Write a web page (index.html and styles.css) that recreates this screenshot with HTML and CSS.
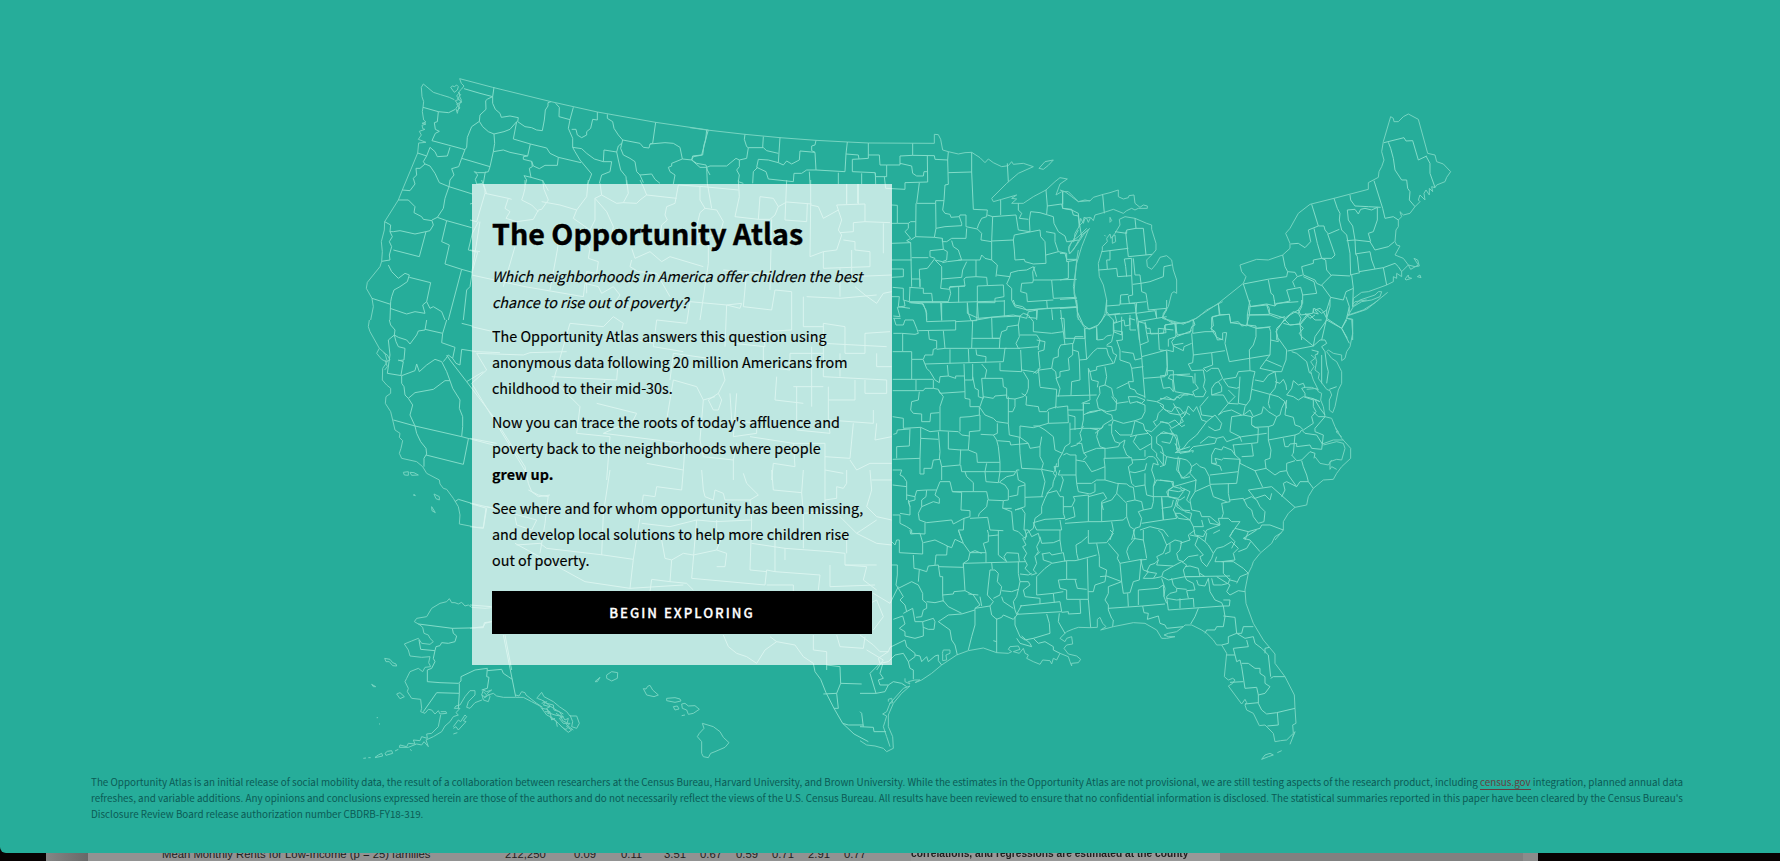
FILE: index.html
```html
<!DOCTYPE html>
<html lang="en">
<head>
<meta charset="utf-8">
<title>The Opportunity Atlas</title>
<link rel="stylesheet" href="styles.css">
</head>
<body>
<main class="hero">
<svg class="map" viewBox="0 0 1780 853" aria-hidden="true">
<!-- Pacific Northwest -->
<g transform="translate(350 60) scale(.33333)">
<path class="coast" d="M329,56 428,82 603,125 742,156 917,187 1075,210M329,56 334,70 342,78 334,88 327,95 329,110 334,120 328,135 322,160 318,145 325,135 316,122 328,118 320,108 326,100M324,96 332,104 322,116 336,126 320,132 330,144 320,154M220,72 250,97 272,104 298,112 313,119M220,72 214,82 216,110 221,125 219,142 217,155 221,180 228,186 216,190 228,192 216,196 219,207 225,208 208,214 214,225 205,238 228,247 206,249 203,279 182,330 157,390 145,420 104,485 103,510 94,545 97,575 95,604 90,620 52,667 49,685 66,715 70,740 62,780M302,82 308,78 313,80 320,75 325,80 322,90 313,97Z"/>
<path d="M219,142 265,155 296,158 316,148M265,155 262,185 253,188 256,208 268,214 256,220 246,242 335,266 345,269M342,86 390,100 428,110 432,82M428,110 413,117 407,122 408,148 390,165 388,184 365,200 352,232 350,262 345,269 335,295 326,320 305,326 312,345 300,360 297,380M388,184 398,200 415,215 432,222 462,215 480,208 500,185M428,110 428,130 436,148 450,160 454,172 480,168 505,173 503,185 525,200 545,203 560,210 577,212 583,180 586,150 594,138 594,128 603,125M500,185 490,237 541,252 590,264 600,280 625,292 693,308M432,222 434,250 430,275 420,320 415,335 403,338 382,338M430,275 460,270 480,277 533,288 541,252M335,295 420,320M533,288 520,290 520,298 545,304 550,318 568,326 585,316 622,316 625,292M545,304 547,320 538,325 543,352 522,347 530,360 526,375M543,352 578,362 595,392M382,338 373,335 383,345 376,358 380,372 400,370 406,335M400,370 410,402M617,130 628,142 627,170 660,179 670,142M660,179 655,205 668,235 668,262 675,275 690,300 725,342 712,375M665,208 678,208 682,225 695,233 710,225 710,215 722,205 728,178 742,180 742,156M668,262 695,266 710,280 733,297 760,305 762,270 800,276 805,258 815,250M772,163 772,175 788,185 792,205 805,225 818,240 870,250 880,262 897,264 900,252 908,250 917,187M900,252 945,248 970,250 990,262 997,297 1025,300 1030,290 1058,285 1062,255 1075,210M997,297 965,310 965,318 955,322 960,335 975,345 970,372M1025,300 1040,310 1068,315 1072,330 1080,345M818,240 812,265 820,285 840,295 855,305 860,335 870,345 880,368M760,305 785,305 780,335 755,345 748,370M800,276 805,300 812,330 828,350 830,375M870,345 905,342 915,358 930,370M203,279 230,288 240,262 255,275 262,290 292,288 300,262M230,288 220,305 225,312 240,318 255,340 268,368 297,380 367,402M225,312 210,325 198,325 200,345 190,355 195,372 180,392 157,390M297,380 285,415 280,445 262,472 246,480M145,420 175,420 195,440 192,458 215,470 220,478 246,482 250,495 240,512 228,515 195,522 150,512 130,515 120,515 122,495 104,485M262,472 290,482 365,503M228,515 208,590 130,570M120,515 127,530 118,545 125,560 118,585 120,600 95,604M115,615 125,635 145,655 165,640 178,645 172,665 150,680 132,690 125,710 122,725 120,780M290,482 275,545 298,555 285,612 335,628M335,628 295,780M367,635 360,680 350,690 340,780M178,652 242,668 230,725 218,735 225,760 195,755 170,762 120,745M66,715 122,733M230,725 240,745 250,740 275,755 285,780M367,430 360,432M385,485 367,520 355,570 383,577 367,635M335,628 367,637"/>
</g>
<!-- Interior West and northern Plains -->
<g transform="translate(470 180) scale(.33333)">
<path d="M35,0 45,30 45,40 20,125 0,120M45,40 115,55 125,58M0,210 30,215M30,125 5,280M5,285 165,320 340,350M115,55 105,85 120,95 108,115 140,125 190,118 205,90 215,88 235,60 222,28 218,0M165,0 165,25 160,45 155,60 185,75 205,95M215,65 270,75 320,90 350,50 355,0M320,90 310,115 360,150 375,120 375,55 395,45 440,70 460,68 475,40 470,0M375,55 410,95 430,140 425,165 440,180M395,45 390,10M460,68 500,70 510,60 530,45 520,20 510,0M530,45 620,55M625,15 615,70 590,80 585,105 592,120 575,135 570,170M625,15 700,20 805,30M690,20 690,60 705,85 690,98 680,140 690,190 650,200M705,85 740,90 760,125 750,160 715,170M805,0 808,50 795,110 865,118 870,50 910,55 925,80 915,105 900,118 865,118M925,80 950,66 1025,72M950,0 945,120 1010,125 1012,70M1022,0 1022,75 1020,230M1022,75 1045,80 1060,115 1105,90 1115,120 1105,150 1115,165 1100,210 1060,215 1020,230M1105,90 1100,75 1185,72 1185,125 1260,128M1130,12 1130,72M1165,12 1165,72M1110,158 1150,155 1150,128 1185,125M1120,180 1155,185 1155,210 1200,215 1200,260 1145,262 1145,210M1060,215 1060,265 1145,262 1145,290 1265,285M1240,130 1240,220M270,150 262,210 240,330M135,200 100,320M345,180 360,205 355,235 385,245 380,280 350,275 350,340M485,205 495,235 540,215 575,245 600,230 700,260M485,240 480,260 505,275 560,280 600,350M340,350 345,310 385,320 395,340 430,320 450,345 440,360 480,380M715,170 715,250 690,420M760,270 905,282M830,275 820,380 905,390 915,330 965,335 965,450 880,455 885,500 790,490M905,118 900,330M1000,350 1000,440 1060,440M1010,350 1110,355 1220,345M1110,265 1110,350M1155,320 1185,345 1220,370 1240,340 1265,335M660,365 770,375 810,385 815,370 770,375 765,500M660,365 650,430 560,420 550,500 640,515M300,430 245,620M300,430 400,440 430,410 460,430 450,470 400,480M20,520 160,525 180,518 290,515M20,520 50,570 5,610 170,880M5,440 70,455M245,590 440,600 445,540 550,550M380,670 500,700 490,720 400,760 640,790M385,650 405,600M600,600 610,520 750,540 765,600 745,640 715,660 730,690 745,690 755,660 745,640M610,600 680,620 700,660 735,650M880,500 880,560 960,570 960,520 1060,520M920,590 915,660 1000,670M1060,430 1125,440 1125,520 1185,520 1185,460 1260,455M1060,490 1250,500M1060,430 1060,590 1250,600 1250,640 1185,640 1185,600M1025,500 1025,680M1075,620 1075,720 1210,730 1210,690M980,620 980,750 1080,760 1075,720M780,640 785,720 860,730 860,760 790,770 800,640M1155,600 1155,660 1075,660M1110,520 1110,590M970,620 1060,620M330,680 320,760 420,770M420,770 410,900M700,660 690,780 700,830 790,840 800,790M790,840 790,900M530,850 640,870M840,770 970,790 975,860 910,850 905,900M970,790 1065,790 1065,870 1120,880M1140,840 1160,870 1200,850 1265,850M1065,830 1140,835 1150,730M250,600 330,680M1220,520 1220,560 1265,560M1220,730 1215,780 1265,770M640,870 645,800M610,600 590,720M460,470 550,490M0,775 80,790"/>
</g>
<!-- Southwest and west Texas -->
<g transform="translate(470 470) scale(.33333)">
<path d="M640,0 635,60 560,50 555,80 520,75 515,110 490,268M420,0 400,130 395,255M175,60 205,75 235,80M235,75 225,160 210,250M0,100 50,115 40,175 0,170M50,110 200,150 185,180 140,165 135,140M135,220 345,335 480,355 640,345M140,225 210,220 230,235 400,255 490,268 480,355M540,365 545,328 600,335 650,340 670,360M575,210 585,265 605,270 600,335M605,270 640,250 670,255 740,240M515,160 600,170 680,150 665,325 885,345 890,300 915,305M740,150 740,180 760,190 740,240 770,250 765,290 740,290M695,0 700,60 705,80 730,90 735,60 760,70 765,90 840,90M820,10 830,40 865,75 840,90 845,150 735,155 680,150M905,0 910,60 995,68 1000,0M845,150 840,300 890,305M845,220 945,235 1080,245 1125,250 1125,285 1220,285M915,235 915,305 1050,315 1045,360M945,270 945,235M890,345 970,345 970,365M1080,285 1080,350 1215,345M1065,0 1065,125 1000,130 995,68M1065,125 1100,130 1130,160 1160,190M1130,180 1130,250M1000,130 1000,235M1100,50 1120,55 1130,40 1130,0M1065,90 1100,85 1100,50M1200,0 1205,60 1190,110 1220,140 1265,150M1205,30 1265,30M1160,190 1220,220 1265,225M1220,150 1160,190M760,495 775,530 800,550 830,560 860,580 885,540 920,515 900,500M920,515 975,525 1000,560 1030,580 1035,605 1052,628 1068,668 1092,715 1118,760 1152,792 1195,815M1030,495 1030,540 1070,545 1070,600M1070,585 1110,590 1112,640 1100,670 1060,672M1112,640 1175,642M1100,670 1105,715 1092,715M1118,760 1135,765 1180,765M1100,495 1110,530 1180,535 1185,500M105,495 125,600M0,475 40,470 45,460 65,455M0,405 65,410M1210,370 1260,400 1285,350M1200,400 1220,390 1240,440 1210,480M1190,540 1240,570 1220,600M915,170 915,235M1125,285 1190,290 1180,330 1220,360"/>
</g>
<!-- California -->
<g transform="translate(350 320) scale(.33333)">
<path class="coast" d="M58,0 55,20 60,35 88,85 105,100 112,125 98,145 97,180 110,195 122,205 122,220 108,230 106,250 122,275 128,300 135,330 150,340 148,352 158,362 153,385 148,400 155,415 200,425 218,440 230,460 268,480 270,492 280,505 290,508 310,535 325,560 330,585 328,612 380,622 400,622M88,85 80,100 95,118 108,125 120,120 112,105 100,98M105,120 112,140 104,150M160,457 175,455 175,466 163,465ZM180,457 192,458 205,465 185,466ZM252,522 268,530 268,540 258,536ZM245,560 256,578 246,572ZM190,525 194,524 196,527Z"/>
<path d="M118,0 122,15 135,30 133,45 145,52 170,60 180,72 200,45 205,33 225,30 230,0M225,28 278,40 290,0M278,40 275,68 315,82 308,115M133,45 138,65 145,80 165,85 162,120 145,122M145,120 160,125 153,165M133,45 115,60 120,105 112,160 155,167 195,152 200,132 208,155 230,135 255,118 275,125 290,155 300,182 308,205 330,240 328,265 338,290 338,320 335,350M290,105 300,120 350,185 430,290 525,440 535,490 545,515 565,530 600,525M335,88 330,135 318,130 308,115 295,105 288,115 280,125M155,167 155,190 162,200 165,225 175,235 188,255 180,285 195,318 200,340 212,365 228,385 230,402 222,415 222,440M175,235 195,218 250,208 285,182 300,182M130,300 195,318 335,350 430,375M355,357 340,433 228,405M335,88 380,95 450,98M335,10 367,18M350,185 400,155M315,545 325,538 365,550 408,560 460,570M408,565 400,622"/>
</g>
<!-- Alaska and Hawaii -->
<g transform="translate(350 580) scale(.33333)">
<path class="coast" d="M425,83 405,85 365,82 355,75 345,78 335,67 325,72 315,68 305,68 298,56 290,65 270,70 245,85 230,110 200,115 193,125 210,135 218,142 222,160 235,165 240,175 250,185 240,193 215,190 205,175 185,183 163,192 175,210 180,228 215,232 240,230 236,248 242,260 225,262 218,275 205,265 180,275 170,295 165,305 175,325 172,335 185,355 212,358 215,385 212,395 225,400 235,388 245,390 255,402 265,392 270,402 290,400 288,395 272,395M272,405 265,440 245,460 230,462 232,475 215,470 210,482 190,480 195,492 175,490 170,500 150,495 148,502 175,502 200,492 215,495 222,485 235,500 228,480 250,470 275,455 285,438 300,425 310,410 325,405 318,398 330,385 313,385 318,378 330,375 345,350 360,332 375,332 375,345 355,365 350,382 360,385 375,368 396,360M180,508 185,512M135,513 145,508M105,520 112,514 125,512 128,520 108,526ZM75,532 85,525 95,520 98,528 75,533M40,535 48,534M55,533 62,533M396,345 400,360 415,365 420,350 412,340 425,330 410,335 400,330 395,345 406,352 415,345 430,340 440,348 460,352 497,352M400,335 410,345 402,355M497,345 507,348 515,335 525,338 528,345 560,370 578,382M497,352 520,352 545,365 570,378 590,405 605,412 625,430 640,445 655,457 665,450 650,440 660,430 640,430 628,415 640,410 615,405 600,400 590,385 600,380 580,375 590,365 575,370M560,355 575,337 582,350 610,365 628,380 650,395 660,408 680,408 688,430 680,445 665,440 668,425 660,405M562,355 575,360 590,370 610,375 612,390 628,395 645,420 655,415 650,435 670,450M585,395 600,395 605,420 615,415M575,385 592,388 598,402 590,398M600,412 618,422 622,440M618,400 632,408 638,422 650,428M632,438 645,448 652,446M580,362 600,378 622,392 640,402M310,440 325,420 332,425 345,405 350,410 340,422 348,425 325,450 318,440 310,445M310,462 322,458M104,235 120,238 128,248 138,252 140,258 128,257 118,245 108,245ZM65,313 77,320 70,320ZM140,342 150,338 163,350 150,356ZM80,413 84,413M87,432 90,432M735,305 750,292 742,305ZM770,285 785,275 803,278 802,295 785,303 770,295ZM880,326 888,327 893,319 900,316 908,330 925,345 912,350 890,345ZM950,355 975,353 990,357 993,363 975,367 950,362ZM970,380 982,378 987,387 975,390ZM995,372 1005,370 1015,378 1035,377 1048,388 1030,400 1015,403 1010,390 997,385ZM995,407 1005,405M1057,430 1090,440 1110,455 1120,472 1137,488 1125,502 1095,515 1082,520 1075,533 1060,530 1055,520 1055,485 1042,470 1048,460 1062,445Z"/>
<path d="M205,132 307,145 400,143 403,128 425,125M307,145 310,160 320,168 315,185 295,190 275,188 270,197 258,200 255,212 212,208 207,180M255,212 250,235 255,245 245,265 232,270 232,305 270,308 325,310 333,303 333,290 375,270 412,265 410,290 417,292 412,325 395,330M328,310 328,340 260,338 220,395M328,340 325,385M412,272 455,268 460,280 475,290 487,298M460,165 497,350"/>
</g>
<!-- Upper Midwest -->
<g transform="translate(690 80) scale(.33333)">
<path class="coast" d="M0,143 50,150 165,163 270,173 378,181 472,186 535,189 733,190 733,163 745,164 752,178 758,210 775,215 805,222 825,218 845,217 870,233 885,248 895,237 910,248 935,260 955,257 965,245 970,253 1000,250 1030,260 985,280 950,310 905,355 910,365 935,358 980,345 965,355 980,357 965,370 1000,370 1030,350 1068,330 1095,305 1110,293 1132,297 1110,312 1098,345 1115,335 1135,335 1150,350 1165,365 1200,362M1047,265 1065,245 1090,240 1075,256 1060,268ZM1200,445 1175,465 1150,510 1138,522 1136,500 1150,480 1165,450M1167,440 1172,415 1180,430 1185,415 1200,412M1165,510 1160,540 1155,600 1152,640 1162,690 1165,720"/>
<path d="M50,150 47,180 35,225 8,228 5,240 30,262 50,262 60,258 110,258 138,235 148,240M50,262 52,310 65,385M165,163 163,178 170,200 175,203 220,203 230,212 265,220M220,170 218,203M175,203 170,235 148,240 148,260 140,270 148,285 145,305 160,310M270,173 265,248 280,255 290,243 305,252 328,240 330,213 375,217 378,270M265,248 235,240 205,238 200,262 228,275 235,297 310,305 312,280 335,280 350,270 378,270 465,275 468,222M378,181 375,195 365,198 365,212 375,217M472,186 468,222 505,225 507,237 535,235 535,189M507,237 487,238 487,275 555,278 557,290 590,290 590,255 570,255 568,225 535,225M203,262 190,275 188,310M590,255 630,255 630,228 668,226 668,190M668,226 733,227 735,238 773,240 775,215M583,290 587,325 645,328 645,308 713,306 712,228M630,250 665,258 668,280 680,288 700,288 702,275 712,275M556,278 557,312M515,280 515,312M445,278 445,312M358,275 360,312M470,312 470,370M503,312 503,370M688,308 680,370 737,370 737,362 762,362 765,315 775,313 773,240M775,278 845,276 850,388 892,390 890,410 875,415 865,435 862,445M845,217 845,276M952,250 955,305M762,362 758,390 765,400 780,403 783,412 808,410 810,405 828,405 828,440 862,447M737,370 738,445 733,472 677,470 678,370M738,445 765,440 815,437 815,430 808,410M605,375 622,376 622,430 605,430M622,430 655,430 662,425 677,425M655,430 655,445 645,455 662,475 650,482 662,488M605,490 662,488 665,620M677,470 662,480M757,475 760,508 720,512 720,530 735,535 712,565 688,568 690,620M733,472 757,475 757,485 770,485 785,475 828,475 830,445M785,482 790,500 805,510 815,540 772,545 757,548M760,508 772,515 770,540 757,545 735,540 755,560 755,597 815,592 818,570 830,545M605,540 665,540M665,533 715,533M605,567 640,567 640,590 605,592M862,447 875,460 873,480 905,485 905,540M892,405 908,410 978,405 985,450M932,360 932,405M905,485 908,410M905,483 970,480 973,465 1050,450 1052,470 1065,485 1068,550 1030,552 1005,545 1003,538 975,540 973,510 970,480M805,540 870,540 875,525 885,535 905,540 922,555 918,590M858,540 858,590 828,592 822,597 825,618 780,620 778,628 752,625 755,597M858,590 890,592 892,615M920,585 960,590 962,578 985,572 1010,570 1030,560 1040,590M985,370 985,390 995,400 988,415 1015,418M985,450 1020,455 1018,420 1022,395 1050,398 1090,410 1092,430 1105,455 1125,468 1130,485 1165,480M1068,330 1072,378 1115,372 1118,385 1145,390 1165,400 1168,430 1175,470M1072,378 1070,402M1118,335 1118,372M1068,455 1095,460 1095,485 1105,515 1130,520 1130,545 1160,540M1068,525 1105,515M1160,598 1085,600 1030,600 1028,575 1035,560M1085,600 1090,655 1160,652M1030,600 1028,608 995,610 992,635 1010,640 1012,665 1090,660M960,590 950,612 965,625 965,660 975,680 1012,690 1160,680M940,615 942,650 915,655 915,668 862,668 862,618 940,615M658,665 775,665 782,640 778,622 825,618M806,620 806,667M658,622 700,625 700,640 725,640 728,668M665,597 690,597 690,622M660,622 658,665 640,660 640,625 608,622M605,650 628,650 625,680 660,685M695,668 708,690 710,720M752,668 755,720M832,668 832,700 865,715 862,668M865,715 900,712 970,705 1010,715 1015,695 1042,690 1040,720M1085,688 1088,720M610,715 632,715"/>
</g>
<!-- Great Lakes shore and Northeast -->
<g transform="translate(1060 100) scale(.33333)">
<path class="coast" d="M0,270 15,275 35,290 55,305 75,300 90,303 100,292 130,283 150,278 175,270 175,290 190,297 205,293 207,287 222,285 225,310 240,322 250,315 262,318 262,325 235,325 225,330 215,325 200,332 190,340 160,328 130,338 105,345 100,362 92,352 85,367 80,355 72,352 70,365 60,375 45,400 42,425 20,425M150,352 155,362 150,367ZM133,405 137,409M157,430 157,410 165,405 167,425ZM85,388 70,405 50,435 30,460 25,450 35,425 55,410 80,385M85,390 75,415 65,440 50,490 40,560 52,620 52,650 65,670 75,685 90,687 110,680 125,662 135,640 140,600 130,555 118,530 115,490 127,450 127,440 142,425 140,415 150,402 153,415 165,400 180,375 178,358 195,350 225,355 260,370 275,375 275,388 288,430 288,450 275,465 260,480 262,500 275,508 290,490 300,472 320,467 335,480 340,510 350,540 350,580 342,575 335,580 325,620 310,640 308,655 345,665 370,672 400,660 475,610 550,550 558,530 545,515 540,495 590,478 625,480 668,465 690,445 690,430 677,400 690,385 715,340 750,313 822,295 925,268 925,248 955,232 957,215 965,200 972,180 965,155 970,125 992,50 1000,55 1002,65 1015,65 1030,50 1045,42 1075,58 1103,160 1125,165 1130,185 1150,192 1172,215 1160,232 1155,245 1130,255 1125,263 1115,260 1118,275 1108,265 1108,285 1098,270 1092,280 1095,300 1080,285 1075,300 1080,305 1065,320 1050,340 1030,345 1020,335 1025,350 1015,360 1015,380 1008,390 1005,425 1010,435 1020,438 1005,465 1030,475 1045,495 1065,500 1078,498 1073,480 1062,475 1075,495 1052,508 1045,495 1025,515 1025,530 1010,520 1010,535 1000,530 1000,545 980,555 925,575 905,577 880,595 878,620 900,600 945,585 955,575 965,575 960,590 935,600 905,605 880,620 865,645 910,630 945,608 983,577M1035,537 1045,525 1045,532 1055,535 1038,540ZM1072,530 1080,525 1083,533Z"/>
<path d="M128,283 133,340M8,275 8,325 35,328 40,345 55,348 58,380M972,128 1032,113 1038,123 1058,122 1075,180 1100,168M985,127 992,145 1000,175 1005,210 1025,240 1040,240 1043,265 1050,275 1048,300 1065,320M1098,168 1110,190 1110,220 1125,262M942,242 968,325 975,355 1000,350 1015,360M870,285 872,300 885,318 925,320 962,322M822,295 832,325 840,340 838,360 845,390 860,405 870,460 872,525M862,330 885,328 895,342 902,328 915,325 935,330 952,322 952,360 940,395 925,400 932,425M862,330 865,360 878,378 885,420 860,422M755,313 775,378 792,378 795,390 805,402 838,388M762,385 772,430 785,475 815,475 825,465 803,402M745,390 775,378M745,390 752,425 735,443 715,430 692,432M885,420 930,425 945,450 985,440 1003,425M885,420 887,460 892,470 897,515 970,503 1005,490 1015,500 1025,515M885,462 930,455 935,480 945,507M970,503 980,555M870,525 900,518M875,525 880,565 878,620M815,525 870,528M815,525 785,555 812,592 850,600 858,575 880,565M785,475 797,480 800,510 815,528M785,475 760,480 760,490 725,500 730,525 765,540 770,550 785,557M668,465 675,500 683,515 705,517 712,530 698,545 705,562M683,515 680,530 628,537 550,552 572,620M625,540 633,580 640,585 645,613 690,603 680,570 722,562 728,585 770,580 762,545 730,530M712,530 728,525M572,620 620,615 628,640M568,645 560,675 590,685 632,680M568,645 570,620M475,610 480,645 455,652 455,690 470,712 490,720M480,645 508,643 512,668 540,672 560,678M728,585 728,610 715,630 722,645 758,640 762,625 775,632 785,640 800,630 812,592M715,630 690,645 675,660 690,675 720,672M570,645 630,645 655,655 675,650M720,672 725,720M800,630 800,655 845,685 860,655 868,620 858,590M765,645 750,655 740,645 720,672M800,655 785,720M845,685 862,715M675,660 650,685 650,720M860,655 878,658 878,720M225,355 228,385 250,385 258,465M228,385 200,390 200,400 165,395M197,395 205,470 276,463M125,455 205,445M150,452 150,480 140,480 142,508 115,510M142,508 170,505 173,530 215,527 215,475 193,477 197,500 200,530M220,475 225,525 240,525 243,550 270,545 310,530 312,500 335,495M215,527 218,585 205,588 208,610 230,608M218,553 243,550 245,575 258,580 262,605 265,630 320,625M230,608 260,605M205,583 182,585 180,615 140,618M140,635 148,645 228,638 230,608M228,638 235,665 290,655 288,630M165,645 170,665 160,668 160,695 185,705 185,650M210,645 210,690 228,690M235,665 238,720M255,665 260,685 270,685 272,702 310,700 315,675 345,670 352,705 390,698 395,680 405,675 400,660M110,680 110,720M0,460 15,460 20,478 50,478M0,540 25,535 25,485M0,598 50,595M0,625 52,622M0,655 12,655 15,715 75,715 75,685"/>
</g>
<!-- Central Midwest and upper South -->
<g transform="translate(890 300) scale(.33333)">
<path d="M10,48 30,50 22,22 45,18 42,0M58,8 155,8 343,3M62,8 100,12 110,40 110,65 197,62 197,90 85,92M155,8 155,62M232,8 235,40 243,62M262,8 260,62 243,62M197,65 248,62 305,52 390,48 400,40 415,45 430,65 430,95M343,0 343,50M305,52 307,115 330,115M10,100 35,100 75,103 85,100 80,85 70,60 45,60 40,75 18,75 12,55M38,100 38,155 8,155M38,155 65,155 65,178 100,178 105,165 128,165 130,148 140,145 140,122 118,118 115,92M160,92 165,145 235,145M248,62 245,145M165,145 140,148M235,145 350,145M180,148 180,190M235,147 237,188M8,238 130,238M65,178 65,238M100,180 110,205 120,215 135,240 148,248 150,230 175,228 172,195M105,192 340,185 345,145M78,240 78,272M8,272 100,272 105,265 130,265 130,240M130,265 145,268 150,280 225,275 222,192M175,228 197,235 197,228 222,228M225,240 248,240 248,192M248,230 255,265 265,270 265,290 280,295 275,235 338,235 340,260 350,265 350,290M285,235 290,210 275,192M245,115 330,115 328,145 M258,148 260,165 288,170 287,187M330,115 335,95 350,90 352,80 385,75 390,48M330,188 330,212 395,215 392,150M385,75 388,110 378,130 385,145 445,140 445,150M390,145 345,145M445,140 450,120 440,105 390,105M430,95 485,100 520,95M370,0 375,15 398,20 410,30 470,25 560,22M440,30 440,55 415,52M470,0 472,25M512,30 515,60 520,95 525,135M440,120 465,125 462,150 445,155 450,205 430,220M395,210 430,215 440,220 448,210 485,205 490,175 505,170 505,150 512,135 550,130 555,110 580,110M560,0 562,35 580,75 597,87 625,75 650,40 650,0M583,85 590,178 568,180 565,155 548,150M548,130 548,165 535,175 538,210 510,215 510,230 497,235M620,85 622,120 640,118 650,108 665,105M590,178 610,155 622,145 650,145 655,165 670,190 620,200 620,210 598,215M445,205 450,260 M485,205 497,215 500,240 510,265 505,290 M415,265 415,240 400,215 M450,262 500,268 497,325M568,180 570,240 545,245 543,285M500,288 620,285M595,205 600,300 575,310M595,205 600,215 605,240 625,245 622,262M645,200 650,230 645,255 628,260 630,280 620,300 625,325 650,335 678,330 680,300 670,290 665,265 645,255M650,138 665,140 670,160 680,165 672,190M680,120 690,150 690,180 720,190 725,205 760,200M650,45 690,40M692,0 692,12 735,10 740,60 750,130 755,170 760,235 765,295M655,45 670,60 672,92 665,125 650,135M672,92 697,95 697,120 680,122M672,70 702,60 705,78 720,75 718,55 735,60M738,40 795,32 800,55 830,50M745,65 765,70 770,100 805,100 805,85 850,90M770,100 775,125 750,135M695,155 730,160 735,180 755,175M755,170 830,150 850,155 850,135 880,130M805,100 808,150M830,155 832,200 825,230 760,235M812,230 820,265 840,262 850,275 848,240 835,235 840,225 900,222M725,205 730,245 715,245 720,265 735,270 740,280 765,290M680,265 715,248M715,290 740,290 765,300 755,310 740,305 720,310 715,290M665,290 680,310 715,305M818,50 830,30 830,0M818,50 840,65 855,72 900,65M855,72 858,110 835,118 835,140M268,345 268,320 240,320 240,298 225,295 225,275M270,320 280,290 310,295 315,288 350,285M355,370 320,365 310,355 285,345 268,320M355,290 355,370 358,405 390,412M145,270 160,290 150,320 150,392M62,330 65,305 85,300 88,275M62,330 70,340 95,342 95,365 120,365 122,340 148,338M8,350 40,355 40,385 92,382 120,395 150,392 205,395M10,403 20,400 22,390 58,387M92,382 92,415 145,418M20,475 20,440 58,438 60,385M8,478 90,475 92,415M145,395 150,455 148,478M90,475 90,522 102,522 102,505 125,505 130,480 150,478 155,500 210,495 212,450 175,447 175,395M205,395 215,405 238,408 238,395 270,392 270,345 240,350 210,352 210,395M238,408 235,450 210,450M235,450 260,460 262,487 330,487 325,440 320,420 310,405 272,403M322,370 322,400 310,405M350,285 350,295 375,297 375,320 368,335 355,335M375,297 400,290 410,280 415,265M395,280 410,290 408,315 430,318 445,320 448,335 470,335 475,328 500,320M475,335 475,370 535,368 533,318 500,322M390,412 390,378 430,383 475,370M430,378 445,378 465,390 490,410 495,450 517,460 525,440 540,430 540,368M390,412 415,430 420,445 450,440 455,410M388,412 390,460 395,505 455,508M322,422 360,425 362,435 415,430 M450,440 450,470 460,490 455,508 490,515M533,330 580,330 580,310 600,310M580,310 580,360 575,385 540,388M555,390 555,350 535,345M580,345 600,335 635,330 650,340 665,345 668,358 640,375 635,385 600,385 578,385M590,340 615,335 630,330M520,465 530,460 540,465 558,465 558,525 505,525 510,510M517,460 505,480 505,500 492,500 500,520 490,545 488,560 475,575 465,595 455,620 455,640 435,655 430,685 410,700 405,720M500,490 495,510 490,520 498,530M558,480 585,485 605,515 620,510 645,500 642,475 725,473M645,500 645,540 680,550 710,552M542,440 560,435 575,420 570,400 580,378M560,430 575,430 580,455 590,470 580,480M580,460 620,445 650,445 685,440 690,430 675,425 665,400 665,375 655,375M600,385 625,390 620,410 630,440 645,445 645,475M640,380 615,400M670,360 700,370 735,362 755,355 765,335 765,315 740,305M665,375 670,360M675,390 690,405 725,405 735,362M690,430 705,420 700,440 710,465 725,475 728,490 715,500 718,515 735,518 765,510 770,490M720,410 740,405 730,425 750,450 785,430 785,410 775,400 740,405M718,515 725,550 735,560 765,555 765,520M725,480 765,478 775,470 790,470 800,480 805,495 790,490 785,510 795,540 790,560M735,362 760,372 765,390 775,400M765,390 785,395 800,380 790,365 800,360 805,340 820,325 820,315 800,305 770,300M785,430 785,445 800,460 800,470 820,495 820,460 815,440 800,430 800,410M765,450 765,470M800,410 820,395 850,405 840,430 815,425M800,305 830,290 850,300 870,285 895,285M850,310 870,345 885,335 900,345M820,325 840,340 870,345 880,365 845,385 835,370 815,365 800,380M840,385 850,405 860,405 870,450 900,440M855,430 870,460 900,455M865,470 860,510 880,535 900,530M8,510 35,510 30,525 40,530 50,545 50,600M8,555 50,560M50,585 75,590 75,600 55,605 60,620M75,590 80,572 110,570 108,590 95,600 95,620 130,605 148,610 148,595 135,585 140,570 110,570M140,570 150,545 180,545 187,575 215,577M95,620 85,640 88,660 110,668 185,660 190,672 222,655M155,500 155,540M212,495 215,515 375,515M225,515 230,530 250,548 250,575 187,575M290,490 285,515 288,545 325,548 330,515 330,487M250,575 290,575 295,600 340,602M325,545 345,555 355,570 355,600 340,602 338,625 365,625M330,545 350,530 372,525 380,510 388,510M380,510 385,540 405,550 405,592 460,590M405,555 385,560 383,585 358,590M455,510 465,545 455,590M405,592 405,620 375,630M215,577 213,630 240,632 240,650 222,655M240,655 293,652M293,600 290,620 268,640 265,650M30,640 60,645 60,620 55,600M8,645 30,645 30,670 50,680 65,690 65,700 105,702 105,668M205,690 220,690 222,655M205,690 215,720M293,652 300,690 340,692 M340,625 365,635 370,690 385,695 400,710M375,630 395,625 405,640 402,690 415,690M430,668 465,658 525,655M470,580 500,572 510,590 520,590 520,640 525,655M510,575 520,540 515,528M520,620 545,620 555,600 550,590 595,585M550,620 555,650 525,660M558,525 560,550 605,550 620,540 645,540M560,550 565,575 600,582 615,575 615,550M595,585 595,665 525,670M595,590 640,578 650,595 635,605 635,665 595,665M635,665 700,660 710,650M640,630 635,610 665,600 680,580 685,550M680,580 700,600 710,610 710,650 720,680 735,690M710,552 720,560 730,562 735,600 710,605M735,600 755,605 760,630 745,635 755,655 750,680 735,685 725,720M765,555 770,585 790,590 790,560 800,540 850,545 850,560 835,570 835,590M790,590 835,590M790,605 790,590M760,630 785,625 790,605M815,595 820,660 755,670M820,660 860,655 855,640M835,570 865,575 885,570 870,560M835,590 870,600 885,590M865,600 860,620 875,630 900,632M855,640 870,640 900,660M750,690 780,680 820,690 835,710M665,665 670,690 660,720M510,660 515,690 440,690 430,668"/>
</g>
<!-- Mid-Atlantic -->
<g transform="translate(1160 300) scale(.33333)">
<path class="coast" d="M8,55 12,40 20,25M8,55 45,68 70,72 95,60 110,55 140,30 188,5M568,20 568,40 560,55 575,58 578,100 570,140 560,155 555,175 545,182 545,165 520,160 505,150 500,155 515,175 530,185 545,215 545,250 535,270 525,320 518,338 508,330 508,300 515,285 510,272 500,268 475,235 478,220 465,210 470,185 465,165 475,160M453,165 465,175 452,185 462,200 452,215 460,240 475,270 455,262 435,262M440,268 470,265 475,275 485,280 482,300 490,320 495,350 515,355 525,380 545,415 572,445 572,475 545,500 530,520 520,538 490,540 460,565 445,590 440,615 405,622 385,640 370,665 370,690 345,720M487,432 520,420 550,420 M525,385 535,395 528,395 545,410 M490,435 530,425 550,430 555,445 545,480 530,478 510,485 510,508 515,500 530,508M465,470 480,490 505,495 515,480M577,15 585,5 620,0M655,0 620,28 585,40 560,48"/>
<path d="M175,10 178,45 208,43 212,70 M178,45 157,50 160,78 152,85 165,95 172,120 188,118 188,98 M212,68 235,65 245,78 262,75 288,78 288,110 280,135 268,150 270,212M190,98 200,98 195,130 208,185 330,165M270,0 262,45 262,75M268,20 320,12 328,25 328,43 262,45M320,12 345,18 350,10 415,5 M345,18 343,0M328,40 360,50 375,55 400,35 415,40 425,20 425,0M415,40 423,55 418,72 390,75 370,70M288,85 328,82 332,95 332,120 355,125 352,105 348,95 375,55M332,120 330,165 318,180 300,205 345,215M355,115 380,150 378,180 370,200 365,215 345,215M318,180 365,200M383,153 460,138M395,155 410,160 440,185 448,218 455,220M418,72 430,85 418,100 425,110 460,138 480,120 495,120 500,130 485,140 495,155 M460,138 465,110 490,75 500,60M420,75 445,45 435,42 450,45 465,60 485,60M500,60 545,85 568,130M460,25 460,38 475,42 465,30 480,25 490,35 500,55 510,20 510,0M545,85 560,60M485,165 485,250M495,155 500,195 505,215 500,250M455,150 475,155 470,165M508,268 530,260M455,295 480,305 470,300 455,295 435,290 435,280 425,265 435,262 430,250 415,255 400,242 395,265 380,285 400,290 415,300 430,290M495,350 465,385 465,395 490,405 487,432M410,430 410,440 450,435 455,445 485,448 487,432M370,415 375,440 385,440 390,432 410,430M325,420 405,405 M405,405 400,460 395,465 410,482 425,480 450,455 465,460 462,475 M405,405 418,400 425,390M325,380 325,420 333,450 330,475 315,480 318,505M218,435 275,430 293,428 295,385 285,382 275,375 275,350 250,345 215,350 212,375 210,395 240,410M275,430 280,468 245,470 M220,435 225,465 240,478 240,490 260,500 285,512 318,505 345,525 360,515 380,512 380,490 405,482M275,375 285,382 325,380 340,375 350,350 325,335 310,320 305,340 280,350 275,355M250,345 270,330 280,350M350,350 360,345 365,325 375,305 355,290 330,283 325,310 330,325M330,283 345,265 350,245 345,215M330,283 275,268 270,300 255,320 250,345M345,245 360,250 370,238 378,255 380,270 M270,212 285,215 280,235 275,268M285,240 310,245 325,225 345,215M235,215 270,212M235,215 228,232 190,238 205,260 230,265 240,260M240,230 238,260 235,310 258,315M205,270 225,290 205,310 235,312M380,300 375,345 400,352 405,375 420,380 430,390 460,370 455,350 468,335 460,320 460,300 430,290M375,305 380,325M425,390 435,400 470,405 487,432M465,300 480,325 495,345M460,335 475,350 495,350M100,60 98,100 135,95 165,95M95,100 100,165 155,158 195,152M155,158 158,195 130,205M100,165 98,188 85,192 95,212 130,210M130,205 140,215 155,205 175,205 188,235 175,245 185,260 185,275 155,285 155,265 165,250 175,245M105,220 105,250 115,265 98,275 105,290 130,290 138,275 130,260 135,240 130,210M190,285 205,310 175,345M190,285 155,285M120,320 125,345 160,350M120,320 145,290M50,110 95,92M0,100 18,98 15,75 48,70 50,100M50,105 35,125 40,138 70,152 72,140 95,130M0,150 20,152 22,212 40,212 40,240 45,275 100,285M0,228 22,225 22,212M50,225 98,230 100,250M0,295 45,300 50,290 60,295 75,280 100,285M75,345 85,318 100,335 110,320 120,345 125,360 140,365M60,370 65,355 75,345M0,315 15,330 35,335 45,320 60,325M60,325 75,345M0,365 25,370 45,360 65,380 75,375M140,365 165,345 185,370 180,388 165,392 145,380M60,440 50,455 70,445 85,425 110,405 140,365M45,458 100,452 98,458M85,455 100,440 165,430 170,415 145,410 120,430M170,415 190,410 200,425 245,410M175,345 190,335 215,330 245,345M240,410 245,425M245,410 320,400M240,478 235,515 150,525M165,445 185,450 190,440 215,450 225,465M165,445 155,465 155,490 170,490 165,475 185,480 190,475 240,478M155,490 180,498 185,512M235,515 230,550 150,553 148,530 135,505 120,500 110,490 95,500 90,520 108,540 105,575M205,550 205,580 210,605 185,610 190,640 185,655 205,655 215,665 240,665M105,575 150,555 160,590 200,605M105,575 90,600 95,630 120,635 125,650 150,650 180,675M210,600 250,595 262,620 275,630 280,650 295,670 312,665 315,635 300,620 290,600 275,590 250,600M265,570 335,560 405,622M265,570 285,595 315,585 330,600 335,580M308,562 285,512M365,590 375,570 370,550 380,545 410,560 420,545 445,545 440,525 430,500 425,482M380,512 385,525 410,560M445,545 460,565M240,665 225,685 208,710M225,685 265,695 300,685 305,675M265,695 255,720M305,675 330,675 370,690M180,675 175,655 185,655M180,675 140,690 130,710M180,675 150,670 145,655M0,540 35,545 40,560 20,575 25,590 55,595 70,575 60,565 40,560 75,550 110,540M5,590 10,660M5,625 35,620 40,600M70,565 90,575 80,600 90,610M50,600 45,620 40,630 55,655 90,660 95,640 75,635 50,610M90,660 100,680 130,680 125,660M100,680 105,705 130,710M0,400 40,400 50,420 50,450M20,470 45,475 60,475 55,510 65,535 75,530 95,510M60,475 80,480 90,490 95,500M0,500 15,495 20,470 0,455"/>
</g>
<!-- Gulf coast and Southeast -->
<g transform="translate(860 530) scale(.33333)">
<path class="coast" d="M100,655 80,665 70,655 45,648 20,645 0,632M100,655 98,620 85,590 85,555 100,520 125,490 150,468 130,475 90,520 80,545 68,552 80,558 75,575 70,590 80,620 90,650M85,515 85,508 95,505 98,518 88,520M135,445 135,455 150,462 145,455 165,450 180,450 165,458 185,450 215,430 245,405 290,375 325,362 370,354 410,368 445,370 455,365 445,358 450,350 475,348 480,358 460,365 478,370 490,355 495,370 505,375 500,385 520,395 540,403 548,390 570,392 575,402 580,385 590,390 600,370 625,380 630,395 635,408 635,400 655,398 662,388 650,378 625,372 612,355 620,345 638,342 635,320 620,325 615,335 600,325 610,315 620,305 640,297 655,292 690,293 712,292 712,268 720,262 728,280 738,290 722,300 760,290 820,278 855,280 890,300 905,325 920,325 945,320 925,320 912,315 925,310 950,305 970,290 975,285 995,285 1025,300 1040,310 1060,330 1070,345 1085,345 1100,370 1093,440 1105,450 1118,445 1125,450 1118,460 1105,468 1125,495 1145,522 1155,508 1160,518 1155,525 1160,540 1180,550 1198,587 1215,585 1240,610 1245,635 1262,632 1280,630 1300,610 1298,585 1308,580 1305,535 1303,495 1275,440 1245,400 1245,372 1210,330 1180,280 1158,220 1155,180 1165,130 1175,110 1180,95 1200,70 1235,40 1245,20 1265,8M247,370 250,360 270,360 270,370 258,375 260,390 248,392 248,370M1290,643 1305,605 1298,620M1205,688 1215,675 1230,670 1240,675 1225,680 1205,688M1252,668 1265,662"/>
<path d="M0,490 48,490 30,430 60,400 55,385 85,365 90,352 135,330M68,402 60,430 70,445 55,450 60,465 85,465M0,590 40,592 42,605 78,605M10,590 5,550 0,545M48,490 75,485 85,465 100,455 125,460 140,470M135,330 140,350 165,370 165,380 145,395M60,400 85,395 105,375 130,370 145,395 150,415 160,420 160,448M165,375 180,378 185,395 200,380 205,395 225,378 235,375 235,392 245,405M118,295 135,305 135,318 165,325 190,318 190,295 188,275 165,275 158,235 130,250M118,295 135,282 128,258 100,268M0,315 40,345 60,365 85,365M190,292 205,298 222,298 225,275 220,265 188,275M235,275 270,300 275,330 285,345 292,375M235,275 265,255 305,252 345,240M115,175 130,200 120,210 135,225 140,245M115,175 155,155 175,165 188,190 188,210 200,220 200,235 190,240 185,260 168,262M200,215 225,218 250,212 265,230 305,250M250,215 248,195 280,192 282,185 315,182 310,100M95,105 112,105 112,135 108,165 115,175M175,155 178,118 200,125 205,108 235,105 240,140 248,140 248,195M160,75 162,115 178,118M95,35 105,45 110,30 118,30 118,68 188,72 188,38 180,10 152,12 150,0M225,105 228,75 260,75 262,48 250,42 225,30 190,38M235,110 310,112 310,100 495,95M260,48 275,53 285,28 310,40M295,0 310,40 330,68 325,90 310,100M330,68 378,68 378,98M330,68 345,62 365,70M378,68 370,40 385,35 385,10 382,0M385,18 415,15 415,0M415,15 415,75 440,95 432,80 440,68 475,70 478,95M315,182 340,195 360,225 345,235 345,285 335,320 325,360M345,235 390,228 400,215 382,195 385,165 390,120 405,120 415,130 412,155 425,170 420,195 400,205M355,195 325,192M360,200 365,228M395,98 397,118M410,265 410,368M390,228 395,255 410,268 425,262 430,255 460,268 475,250M425,200 430,215 460,235M425,182 455,185 475,178 470,200 460,215 465,240 470,253M475,95 475,130 480,155 475,180M480,132 505,135 515,130M480,155 505,155 510,165 490,180 495,200 540,205 540,222M480,228 600,215 605,245 470,253 485,225M465,260 465,285 480,320 495,330 520,325 570,310 568,280 560,252M410,335 400,332M485,318 510,340 515,350 480,340 470,325M520,325 535,340 555,335 580,350 580,360 600,370M495,0 500,20 488,25 498,45 488,50 500,70 492,85 502,105 495,115 515,135M505,0 515,20 535,10 540,30 530,50 535,65 525,80 530,100 520,120 530,130 515,135M530,195 530,140 555,115 575,100 620,92 645,92 655,90 710,75M620,92 620,148 595,150 600,175 620,180 620,208 685,208M530,195 580,190 610,185M580,190 583,218M545,72 570,68 575,75 610,68 615,95M548,72 550,90 575,98M540,20 545,40 580,38 600,30 600,0M540,65 530,75M600,30 605,65M645,148 652,175 680,178M620,148 650,148M682,85 685,208 692,292M660,210 662,250 625,252 625,245 605,247M598,250 595,275 615,310M650,70 655,90M650,70 648,45 665,35 682,20M685,0 685,40 740,38 760,10 750,0M710,40 718,80 718,110 740,120 735,155 705,165 700,185 685,185M745,40 775,75 772,85 780,100 845,88M780,100 785,155 745,170 745,190 735,210 745,225 745,240 755,265 760,270 758,290M720,140 740,138 785,155M845,88 842,105 838,150 820,155 810,188 790,190 785,155M745,235 848,228 915,222M803,190 805,230M835,225 835,180 895,175 910,165 912,200 920,220M820,0 825,25 805,50 800,65 808,90M820,25 850,30 850,0M860,85 855,55 850,30M860,88 842,90 850,120 865,125 850,145 880,145 890,130 860,125 870,105 885,100 895,90 890,80 900,75 910,70 920,45 905,10 895,0M895,90 890,105 940,108 910,125 905,140M880,145 905,140 925,150 975,140 970,120 980,105 965,95 940,108M905,145 915,175 912,200M920,45 945,30 965,35 960,60 950,70 955,90 970,95 985,80 1015,75M930,40 930,65 915,72M960,40 990,30 985,15 1005,0M990,15 1015,20 1005,45 1030,75 1020,80 1025,95 1040,110 1055,85 1060,70 1045,45 1035,35 1040,10 1030,0M1015,20 1035,35M1060,70 1070,55 1090,50 1115,35 1135,55 1120,70 1125,90 1085,95M1070,80 1065,95 1090,95 1090,130 1110,150 1130,155M975,110 990,108 1015,115 1020,140 980,140M1020,130 1035,140M1010,150 1015,165 1035,168 1045,145 1050,185 1065,210 1085,218 1090,230M975,140 1110,138M935,145 940,165 950,175 950,185 930,190 920,200 925,240 1090,228M960,205 960,235M920,205 950,210 1000,205 1002,232M985,205 980,182 1005,180 1000,160 980,150 975,140M950,175 980,178M1055,145 1060,165 1085,165 1105,160 1110,145M1070,140 1110,165 1100,185 1110,195 1135,182 1155,185M1090,210 1110,210 1108,228 1090,228M1130,160 1140,140 1165,130M1085,95 1120,95 1150,115 1165,130M848,228 852,248 865,250 862,268 895,258 900,280 915,285 920,295 970,290M1015,235 1005,260 992,282M1090,228 1095,260 1090,290 1070,290 1065,300 1040,300 1035,310M1090,258 1125,262 1130,310 1145,310 1150,290 1180,290M1085,345 1105,340 1105,320 1130,310 1155,325 1180,320 1185,340 1205,355 1215,365 1225,375 1232,440M1100,375 1125,375 1120,355 1165,350 1160,330M1125,375 1130,395 1140,390 1145,410 1155,475M1232,445 1240,440 1275,440M1145,400 1165,400 1185,415 1200,415 1200,430 1215,440 1215,460 1230,470 1215,490 1195,495 1190,472 1155,475M1110,457 1150,455M1195,495 1195,520 1205,540 1220,552 1250,548 1305,535M1155,522 1195,518M1252,548 1255,585 1222,588M1215,370 1215,355 1228,352M1150,25 1170,30 1200,65M1110,20 1125,35 1115,55M1150,25 1190,0M1110,20 1120,0M1135,65 1160,55 1172,35M1060,10 1080,0"/>
</g>
</svg>
<section class="panel">
<h1>The Opportunity Atlas</h1>
<p class="lead">Which neighborhoods in America offer children the best<br>chance to rise out of poverty?</p>
<p>The Opportunity Atlas answers this question using<br>anonymous data following 20 million Americans from<br>childhood to their mid-30s.</p>
<p>Now you can trace the roots of today's affluence and<br>poverty back to the neighborhoods where people<br><strong>grew up.</strong></p>
<p>See where and for whom opportunity has been missing,<br>and develop local solutions to help more children rise<br>out of poverty.</p>
<button class="begin" type="button">BEGIN EXPLORING</button>
</section>
<footer class="notice">
<div>The Opportunity Atlas is an initial release of social mobility data, the result of a collaboration between researchers at the Census Bureau, Harvard University, and Brown University. While the estimates in the Opportunity Atlas are not provisional, we are still testing aspects of the research product, including <a href="#">census.gov</a> integration, planned annual data</div>
<div>refreshes, and variable additions. Any opinions and conclusions expressed herein are those of the authors and do not necessarily reflect the views of the U.S. Census Bureau. All results have been reviewed to ensure that no confidential information is disclosed. The statistical summaries reported in this paper have been cleared by the Census Bureau's</div>
<div>Disclosure Review Board release authorization number CBDRB-FY18-319.</div>
</footer>
</main>
<div class="behind">
<div class="edge"></div>
<div class="sheet"><span class="label">Mean Monthly Rents for Low-Income (p = 25) families</span><span class="count">212,250</span><span>0.09</span><span class="w43">0.11</span><span>3.51</span><span>0.67</span><span>0.59</span><span>0.71</span><span>2.91</span><span>0.77</span></div>
<div class="side">correlations, and regressions are estimated at the county</div>
<div class="shade"></div>
<div class="trim"></div>
</div>
</body>
</html>
```
FILE: styles.css
```css
* { box-sizing: border-box; }
body {
  margin: 0;
  width: 1780px;
  height: 861px;
  overflow: hidden;
  background: #080203;
  font-family: "Noto Sans CJK SC", "Open Sans", sans-serif;
}
.hero {
  position: relative;
  z-index: 1;
  display: flex;
  flex-direction: column;
  height: 853px;
  padding: 183.5px 91px 0;
  background: #26ad9a;
  border-radius: 0 0 0 6px;
}
.map {
  position: absolute;
  inset: 0;
  width: 1780px;
  height: 853px;
  fill: none;
  stroke: #83dcc9;
  stroke-width: 3;
  stroke-linejoin: round;
}
.coast { stroke: #76d4c1; }
.panel {
  position: relative;
  width: 420px;
  height: 481px;
  margin-left: 381px;
  padding: 28px 20px 0;
  background: rgba(255, 255, 255, .7);
  color: #000;
  white-space: nowrap;
}
h1 {
  margin: 0 0 10px;
  font-size: 28.65px;
  line-height: 41px;
  font-weight: 700;
  -webkit-text-stroke: .4px #000;
}
.panel p {
  margin: 0 0 8px;
  font-size: 14.35px;
  line-height: 26px;
  -webkit-text-stroke: .15px #000;
}
.panel .lead { font-style: italic; }
.begin {
  display: block;
  width: 380px;
  height: 43px;
  margin-top: 18px;
  padding: 0;
  border: 0;
  background: #000;
  color: #fff;
  font: 500 13.2px/43px "Noto Sans CJK SC", sans-serif;
  letter-spacing: 2px;
  -webkit-text-stroke: .3px #fff;
}
.notice {
  position: relative;
  margin-top: 109px;
  font-size: 9.85px;
  line-height: 16px;
  color: #0b5b55;
  white-space: nowrap;
}
.notice a {
  color: #633f40;
  text-decoration: none;
  border-bottom: 1px solid #633f40;
}
.behind {
  display: flex;
  height: 12px;
  margin-top: -4px;
  padding-left: 46px;
  overflow: hidden;
  font: 11.3px/10px "Liberation Sans", Arial, sans-serif;
  color: #202020;
  white-space: nowrap;
}
.edge { width: 42px; background: linear-gradient(90deg, #858585, #686868); }
.sheet { display: flex; width: 823px; padding-left: 74px; background: #929292; }
.sheet span { width: 36px; }
.sheet .label { width: 343px; }
.sheet .count { width: 69px; }
.sheet .count + span { width: 47px; }
.sheet .w43 { width: 43px; }
.side { width: 309px; background: #989898; filter: blur(.5px); font-weight: 700; font-size: 10.2px; }
.shade { width: 303px; background: #808080; }
.trim { width: 15px; background: #8b8b8b; }
```
